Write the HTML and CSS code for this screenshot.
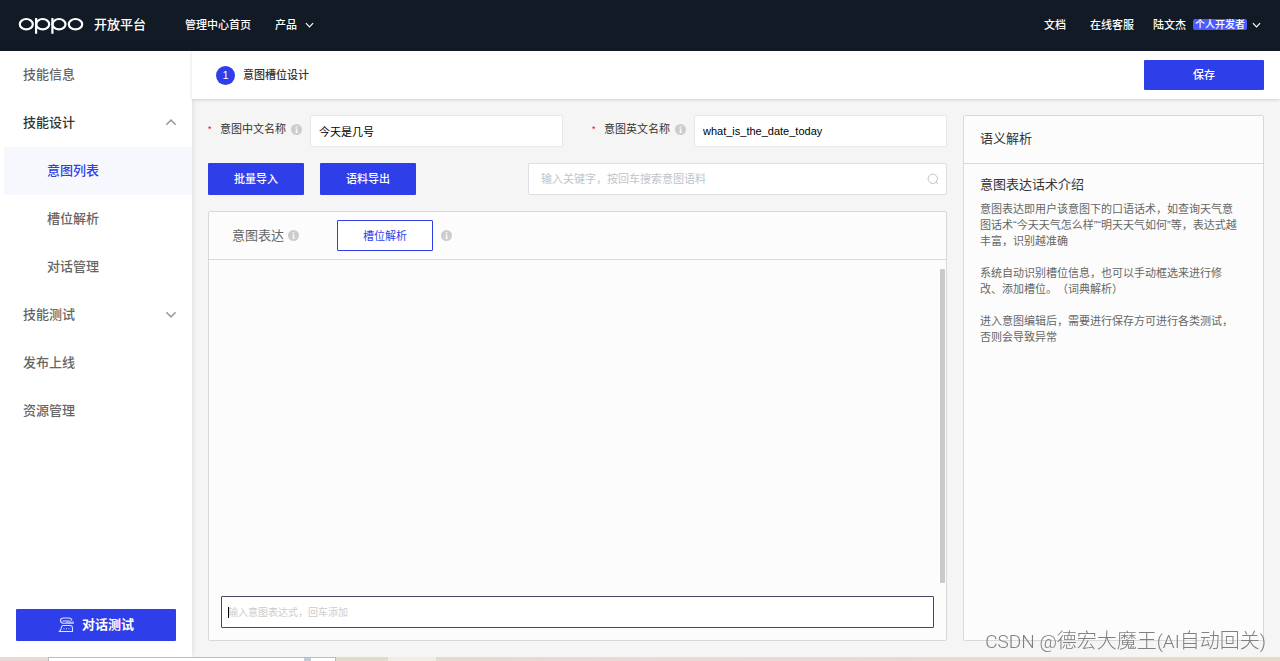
FILE: index.html
```html
<!DOCTYPE html>
<html lang="zh-CN">
<head>
<meta charset="utf-8">
<meta name="viewport" content="width=device-width, initial-scale=1">
<title>意图槽位设计</title>
<link rel="stylesheet" href="styles.css">
</head>
<body>
<svg class="defs" width="0" height="0" aria-hidden="true">
  <symbol id="info" viewBox="0 0 12 12"><circle cx="6" cy="6" r="6" fill="#ccc"/><path d="M5 2.5h2v1.4H5zM4.8 5H7v4h.6v.8H4.6V9h.7V5.8h-.5z" fill="#f7f7f7"/></symbol>
  <symbol id="chevron" viewBox="0 0 10 6"><path d="M1 1l4 4 4-4" fill="none" stroke="currentColor" stroke-width="1.3"/></symbol>
</svg>

<header class="header">
  <a class="brand" href="#">
    <svg class="logo" viewBox="0 0 66 18" role="img" aria-label="OPPO">
      <g fill="none" stroke="#fff" stroke-width="2.2">
        <ellipse cx="8.3" cy="8.2" rx="6.500" ry="5.200"/>
        <ellipse cx="24.700" cy="8.2" rx="6.500" ry="5.200"/>
        <ellipse cx="41" cy="8.2" rx="6.500" ry="5.200"/>
        <ellipse cx="57.500" cy="8.2" rx="6.700" ry="5.200"/>
        <path d="M18.1 2v15.700M34.4 2v15.700"/>
      </g>
    </svg>
    <span class="brand-name">开放平台</span>
  </a>
  <nav class="nav">
    <a href="#">管理中心首页</a>
    <a href="#">产品<svg class="caret"><use href="#chevron"/></svg></a>
  </nav>
  <nav class="nav nav-right">
    <a href="#">文档</a>
    <a href="#">在线客服</a>
    <a class="user" href="#">陆文杰<span class="tag">个人开发者</span><svg class="caret"><use href="#chevron"/></svg></a>
  </nav>
</header>

<div class="layout">
  <aside class="sidebar">
    <nav class="menu">
      <a href="#">技能信息</a>
      <a class="open" href="#">技能设计<svg class="arrow up"><use href="#chevron"/></svg></a>
      <a class="sub active" href="#">意图列表</a>
      <a class="sub" href="#">槽位解析</a>
      <a class="sub" href="#">对话管理</a>
      <a href="#">技能测试<svg class="arrow"><use href="#chevron"/></svg></a>
      <a href="#">发布上线</a>
      <a href="#">资源管理</a>
    </nav>
    <button class="btn test" type="button">
      <svg class="test-icon" viewBox="0 0 16 16" fill="none" stroke="#dfe3ff" stroke-width="1.1"><path d="M14 3.5C13.5 1.5 12.5 1 11 1H5.5C3.500 1 2.500 2.200 2.500 3.600S3.500 6.200 5.500 6.200H15.500M4.500 4h8"/><path d="M8 5.600h8" stroke-width="2" stroke="#a9b1f8"/><path d="M5 8.500h7.500c1.500 0 2 1 2 3V14.500H.8c2-.6 2.200-1.500 2.500-3.500.2-1.600.7-2.500 1.700-2.500zM5.500 11.800h1M8 11.800h1M10.500 11.800h1"/></svg>
      对话测试
    </button>
  </aside>

  <main class="main">
    <div class="topbar">
      <span class="step">1</span>
      <h1>意图槽位设计</h1>
      <button class="btn save" type="button">保存</button>
    </div>
    <div class="content">
      <section class="editor">
        <div class="fields">
          <div class="field">
            <label for="cn"><i>*</i>意图中文名称<svg class="info"><use href="#info"/></svg></label>
            <input id="cn" type="text" value="今天是几号">
          </div>
          <div class="field">
            <label for="en"><i>*</i>意图英文名称<svg class="info"><use href="#info"/></svg></label>
            <input id="en" type="text" value="what_is_the_date_today">
          </div>
        </div>
        <div class="tools">
          <button class="btn" type="button">批量导入</button>
          <button class="btn" type="button">语料导出</button>
          <div class="search">
            <input type="search" aria-label="搜索意图语料" placeholder="输入关键字，按回车搜索意图语料">
            <svg viewBox="0 0 12 12" fill="none" stroke="#c0c4cc"><circle cx="5.800" cy="5.800" r="4.700"/><path d="M9 9l2 2"/></svg>
          </div>
        </div>
        <div class="panel">
          <div class="panel-head">
            <span class="tab">意图表达</span><svg class="info"><use href="#info"/></svg>
            <button class="btn outline" type="button">槽位解析</button><svg class="info"><use href="#info"/></svg>
          </div>
          <div class="scroll"><div class="thumb"></div></div>
          <div class="entry"><input type="text" aria-label="意图表达式" placeholder="输入意图表达式，回车添加"></div>
        </div>
      </section>
      <aside class="panel help">
        <h2>语义解析</h2>
        <div class="help-body">
          <h3>意图表达话术介绍</h3>
          <p>意图表达即用户该意图下的口语话术，如查询天气意图话术“今天天气怎么样”“明天天气如何”等，表达式越丰富，识别越准确</p>
          <p>系统自动识别槽位信息，也可以手动框选来进行修改、添加槽位。（词典解析）</p>
          <p>进入意图编辑后，需要进行保存方可进行各类测试，否则会导致异常</p>
        </div>
      </aside>
    </div>
  </main>
</div>
<div class="desktop"><div class="window"><span class="knob"></span></div><div class="gap"></div><div class="pale"></div></div>
<div class="watermark"><span>CSDN @</span>德宏大魔王<span>(AI</span>自动回关<span>)</span></div>
</body>
</html>
```

FILE: styles.css
```css
* { box-sizing: border-box; }

body {
  margin: 0;
  min-height: 100vh;
  display: flex;
  flex-direction: column;
  font: 11px/16px "Liberation Sans", "Noto Sans CJK SC", sans-serif;
  text-spacing-trim: space-all;
  color: #333;
  background: #f5f5f5;
}

a { color: inherit; text-decoration: none; }
h1, h2, h3, p { margin: 0; font-weight: 400; }
input, button { font: inherit; }
svg { flex: none; }
.defs { position: absolute; }

.header {
  height: 51px;
  display: flex;
  align-items: center;
  padding: 0 19px 2px 18px;
  background: #121a25;
  color: #fff;
}
.brand { display: flex; align-items: center; gap: 10px; margin-right: 39px; }
.logo { width: 66px; height: 18px; }
.brand-name { font-size: 13px; font-weight: 500; line-height: 20px; }
.nav { display: flex; gap: 24px; font-weight: 500; }
.nav a { display: flex; align-items: center; }
.nav-right { margin-left: auto; gap: 24px; }
.nav-right .user { margin-left: -5px; }
.caret { width: 9px; height: 6px; margin-left: 8px; }
.tag {
  margin-left: 7px;
  padding: 0 2px;
  border-radius: 2px;
  background: #4a5cff;
  font-size: 10px;
  line-height: 11px;
}
.user .caret { margin-left: 5px; }

.layout { flex: 1; display: flex; }

.sidebar {
  width: 192px;
  display: flex;
  flex-direction: column;
  justify-content: space-between;
  background: #fff;
  box-shadow: 0 0 6px rgba(0, 0, 0, .12);
}
.menu { padding-left: 4px; }
.menu a {
  height: 48px;
  display: flex;
  align-items: center;
  justify-content: space-between;
  padding: 0 15px 1px 19px;
  font-size: 13px;
  font-weight: 500;
  color: #666;
}
.menu .open { color: #333; }
.menu .sub { padding-left: 43px; }
.menu .active { background: #f6f8fd; color: #2e3ee9; }
.arrow { width: 12px; height: 7px; color: #999; }
.arrow.up { transform: rotate(180deg); }

.btn {
  height: 32px;
  width: 96px;
  padding: 0;
  border: 0;
  border-radius: 1px;
  background: #2e3ee9;
  color: #fff;
  font-weight: 500;
}
.test {
  width: auto;
  margin: 16px;
  display: flex;
  align-items: center;
  justify-content: center;
  gap: 8px;
  font-size: 13px;
  font-weight: 700;
}
.test-icon { width: 16px; height: 16px; }

.main { flex: 1; min-width: 0; display: flex; flex-direction: column; }
.topbar {
  height: 48px;
  display: flex;
  align-items: center;
  gap: 8px;
  padding: 0 16px 0 24px;
  background: #fff;
  box-shadow: 0 1px 3px rgba(0, 0, 0, .15);
}
.topbar h1 { font-size: 11px; font-weight: 500; }
.step {
  width: 19px;
  border-radius: 50%;
  background: #2e3ee9;
  color: #fff;
  line-height: 19px;
  text-align: center;
}
.save { width: 120px; height: 30px; margin-left: auto; }

.content { flex: 1; display: flex; gap: 16px; padding: 16px; }
.editor { flex: 1; min-width: 0; display: flex; flex-direction: column; gap: 16px; }
.fields { display: grid; grid-template-columns: 1fr 1fr; gap: 29px; }
.field { display: flex; }
.field label { width: 102px; height: 28px; flex: none; display: flex; align-items: center; }
.field i { width: 12px; color: #f00; font-style: normal; font-size: 9px; }
.field .info { margin-left: 5px; }
.info { width: 11px; height: 11px; }
.field input {
  flex: 1;
  min-width: 0;
  height: 32px;
  padding: 0 8px;
  border: 1px solid #e8e8e8;
  border-radius: 2px;
  background: #fff;
  color: #000;
}
.tools { display: flex; gap: 16px; }
.search { position: relative; width: 419px; margin-left: auto; }
.search input {
  width: 100%;
  height: 32px;
  padding: 0 32px 0 12px;
  border: 1px solid #dcdfe6;
  border-radius: 2px;
  background: #fff;
  appearance: none;
}
.search svg { position: absolute; right: 8px; top: 10px; width: 12px; height: 12px; }
input::placeholder { color: #c0c4cc; }

.panel { border: 1px solid #d9d9d9; border-radius: 2px; background: #fcfcfc; }
.editor .panel { flex: 1; display: flex; flex-direction: column; }
.panel-head {
  height: 48px;
  display: flex;
  align-items: center;
  padding-left: 23px;
  border-bottom: 1px solid #d9d9d9;
}
.tab { margin-right: 4px; font-size: 13px; color: #666; }
.outline {
  height: 31px;
  margin: 0 8px 0 38px;
  border: 1px solid #2e3ee9;
  background: #fff;
  color: #2e3ee9;
  font-weight: 400;
}
.scroll { flex: 1; display: flex; padding: 9px 1px 0; }
.thumb { width: 5px; margin-left: auto; border-radius: 1px; background: #c9c9c9; }
.entry { position: relative; padding: 13px 12px 12px; }
.entry::before {
  content: "";
  position: absolute;
  left: 19px;
  top: 24px;
  width: 1px;
  height: 11px;
  background: #000;
}
.entry input {
  display: block;
  width: 100%;
  height: 32px;
  padding: 0 6px;
  border: 1px solid #474761;
  border-radius: 1px;
  background: #fff;
  font-size: 10px;
}
.entry input::placeholder { color: #ccc; }

.help { width: 301px; }
.help h2 { padding: 13px 16px 14px; border-bottom: 1px solid #d9d9d9; font-size: 13px; line-height: 20px; }
.help-body { padding: 11px 20px 16px 16px; color: #666; }
.help h3 { margin-bottom: 6px; font-size: 13px; line-height: 20px; color: #333; }
.help p { margin-bottom: 16px; }

.desktop { height: 4px; display: flex; background: linear-gradient(90deg, #ead9d6, #e3dac9 30%, #ead9d6 50%, #e6dac8); }
.window { width: 288px; margin-left: 48px; border: 1px solid #bbb; border-bottom: 0; background: #fff; }
.knob { display: block; width: 7px; height: 3px; margin-left: 255px; background: #c3cbd8; }
.gap { width: 52px; }
.pale { width: 48px; background: #f2ece1; }

.watermark {
  position: fixed;
  right: 14px;
  bottom: 5px;
  font-size: 20px;
  line-height: 28px;
  font-family: Roboto, "Noto Sans CJK SC", sans-serif;
  font-weight: 300;
  color: #808080;
}
.watermark span { font-size: 19px; }
```
